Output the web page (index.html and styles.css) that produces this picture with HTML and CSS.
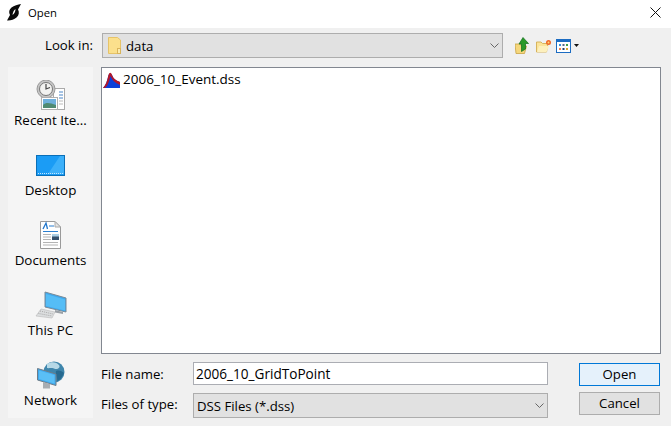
FILE: index.html
```html
<!DOCTYPE html>
<html lang="en">
<head>
<meta charset="utf-8">
<title>Open</title>
<link rel="stylesheet" href="styles.css">
</head>
<body>
<div class="dialog">
  <header class="titlebar">
    <svg class="app-icon" width="14" height="17" viewBox="0 0 14 17"><path d="M14 0C11 .5 7 1.500 4.500 3.500 2 5.500 1.500 8.500 3 11L0 16.500C3 17 7 15.500 9.500 13.500 12 11.500 12.500 8 11 5.500Z" fill="#0a0a0a"/><path d="M8.500 5C7 6 5.800 8.200 5.500 11 7 10 8.500 7.800 8.500 5Z" fill="#fff"/></svg>
    <span class="title">Open</span>
    <svg class="close" width="11" height="11" viewBox="0 0 11 11"><path d="M.5.500 10.500 10.500M10.500.500.5 10.500" stroke="#111" stroke-width="1" fill="none"/></svg>
  </header>
  <div class="toolbar">
    <span class="lookin-label">Look in:</span>
    <div class="combo lookin">
      <svg class="folder" width="13" height="17" viewBox="0 0 13 17"><path d="M.5.500H9.500L12.500 3V16.500H.5Z" fill="#fbe08c" stroke="#e6c368"/><rect x="9.500" y="11.500" width="3" height="5" fill="#fcecb0" stroke="#d9b45a"/></svg>
      <span class="combo-text">data</span>
      <svg class="chev" width="9" height="6" viewBox="0 0 9 6"><path d="M.5.500 4.500 4.500 8.500.5" fill="none" stroke="#666"/></svg>
    </div>
    <div class="tools">
      <svg width="14" height="17" viewBox="0 0 14 17"><path d="M0 7H5L6.500 9H11.500L9.500 16.500H1Z" fill="#f5d77c" stroke="#c9a244" stroke-width=".8"/><path d="M6.500 14.500V7H4L8 .5 13.500 6.500H10.500V12Z" fill="#2a9a2a" stroke="#0f6b1a" stroke-width=".7"/></svg>
      <svg class="tool-new" width="16" height="14" viewBox="0 0 16 14"><path d="M.5 3H5L6.500 4.500H12L10.500 13H.5Z" fill="#fbe49a" stroke="#d4ae52" stroke-width=".9"/><path d="M3 7H13L10.500 13H1Z" fill="#fdf0bd"/><circle cx="12.500" cy="3.500" r="2.500" fill="#f0682a"/><circle cx="12.500" cy="3.500" r="1" fill="#ffd86a"/></svg>
      <svg class="tool-view" width="15" height="14" viewBox="0 0 15 14"><rect x=".5" y=".5" width="14" height="13" fill="#fff" stroke="#1c6cc2"/><rect x="1" y="1" width="13" height="2" fill="#1c6cc2"/><rect x="3" y="5" width="2" height="2" fill="#3d8fd8"/><rect x="6.500" y="5" width="2" height="2" fill="#5a6a8a"/><rect x="10" y="5" width="2" height="2" fill="#3aa04a"/><rect x="3" y="9" width="2" height="2" fill="#ef8050"/><rect x="6.500" y="9" width="2" height="2" fill="#24406e"/><rect x="10" y="9" width="2" height="2" fill="#d9a52e"/></svg>
      <svg class="tool-caret" width="5" height="3" viewBox="0 0 5 3"><path d="M0 0H5L2.500 3Z" fill="#111"/></svg>
    </div>
  </div>
  <div class="main">
    <nav class="places">
      <div class="place">
        <div class="place-icon">
          <svg width="30" height="30" viewBox="0 0 30 30"><rect x="17.500" y="8.500" width="11" height="21" fill="#fff" stroke="#aaa"/><path d="M23 12h4M23 15h4M23 18h4" stroke="#4a86c8"/><path d="M23 21h4M23 24h4" stroke="#bbb"/><circle cx="10" cy="9" r="9" fill="#c4c4c4" stroke="#9a9a9a"/><circle cx="10" cy="9" r="6.500" fill="#f2f2f0" stroke="#777"/><path d="M10 4V9L14 7.500" fill="none" stroke="#444" stroke-width="1.200"/><rect x="5.500" y="17.500" width="16" height="12" fill="#fff" stroke="#b0b0b0"/><rect x="7" y="19" width="13" height="9" fill="#6fb0dc"/><path d="M7 25C10 22 14 23 20 25V28H7Z" fill="#4f8a72"/></svg>
        </div>
        <span class="place-label">Recent Ite...</span>
      </div>
      <div class="place">
        <div class="place-icon">
          <svg width="29" height="21" viewBox="0 0 29 21"><rect x=".5" y=".5" width="28" height="20" fill="#1b9cf5" stroke="#0a6fb8"/><path d="M12 19 24 1H28V19Z" fill="#3cb0fa"/><path d="M2 18.500H27" stroke="#bfe6ff" stroke-dasharray="1 1"/></svg>
        </div>
        <span class="place-label">Desktop</span>
      </div>
      <div class="place">
        <div class="place-icon">
          <svg width="21" height="28" viewBox="0 0 21 28"><path d="M.5.500H15L20.500 6V27.500H.5Z" fill="#fff" stroke="#9a9a9a"/><path d="M15 .5V6H20.500Z" fill="#e4e4e4" stroke="#aaa"/><path d="M3 8 6 2 7.500 8" fill="none" stroke="#2277cc" stroke-width="1.300"/><path d="M9 5h5M3 10.500H18" stroke="#2b7fd0"/><path d="M3 13.500h8M3 16h8M3 18.500h8M3 21.500H18M3 24H18" stroke="#b4b4b4"/><rect x="12" y="13" width="7" height="6" fill="#34506c"/><rect x="12" y="13" width="7" height="2.500" fill="#a9cde4"/></svg>
        </div>
        <span class="place-label">Documents</span>
      </div>
      <div class="place">
        <div class="place-icon">
          <svg width="32" height="28" viewBox="0 0 32 28"><path d="M10 1 31 7V21L10 16Z" fill="#3ea8ee" stroke="#7a8a96"/><path d="M11 3 30 8.500V19.500L11 15Z" fill="#55bdf6"/><path d="M20 19 28 21V23L20 21.500Z" fill="#9aa0a6"/><path d="M6 18 20 21 17 27 1 25Z" fill="#dcdedf" stroke="#b8b8b8" stroke-width=".6"/><path d="M5 20 18 23M3.500 22.500 17 25" stroke="#a8a8a8" stroke-dasharray="1 1"/></svg>
        </div>
        <span class="place-label">This PC</span>
      </div>
      <div class="place">
        <div class="place-icon">
          <svg width="28" height="29" viewBox="0 0 28 29"><circle cx="17" cy="11" r="10.500" fill="#3f86ac"/><path d="M10 3C14 0 20 1 22 4 24 7 20 9 17 7.500 14 6.500 12 7.500 10 7Z" fill="#b6d8e6"/><path d="M19 10C22 9 25 10 27 12 25 17 22 20 20 20 21 17 18 14 19 10Z" fill="#276a90"/><path d="M.5 7.500 19 13V24.500L.5 19Z" fill="#3fa9ee" stroke="#6d7c88"/><path d="M2 9.500 17.500 14V22.500L2 18Z" fill="#5abff6"/><path d="M6 21 13 23V27.500H6Z" fill="#a8adb2"/></svg>
        </div>
        <span class="place-label">Network</span>
      </div>
    </nav>
    <div class="content">
      <div class="filelist">
        <div class="file">
          <svg width="17" height="17" viewBox="0 0 17 17"><path d="M0 16C3 13 4 9 5.500 3 6.500 1 8 1 9 3 10.500 7 13 9 17 10V16Z" fill="#0c3fd8"/><path d="M0 16C3 13 4 9 5.500 3 6.500 0 8 0 9 3 10.500 7 13 8 17 10V13C12 11 9 8 7.500 4 6.500 8 5 14 2 16Z" fill="#b2172a"/></svg>
          <span class="file-name">2006_10_Event.dss</span>
        </div>
      </div>
      <div class="footer">
        <div class="fields">
          <div class="row row-name">
            <label class="field-label">File name:</label>
            <div class="input">2006_10_GridToPoint</div>
          </div>
          <div class="row row-type">
            <label class="field-label type-label">Files of type:</label>
            <div class="combo type">
              <span class="combo-text">DSS Files (*.dss)</span>
              <svg class="chev" width="9" height="6" viewBox="0 0 9 6"><path d="M.5.500 4.500 4.500 8.500.5" fill="none" stroke="#666"/></svg>
            </div>
          </div>
        </div>
        <div class="buttons">
          <div class="btn primary">Open</div>
          <div class="btn">Cancel</div>
        </div>
      </div>
    </div>
  </div>
</div>
</body>
</html>
```
FILE: styles.css
```css
* { box-sizing: border-box; }
html, body { margin: 0; padding: 0; }
body {
  width: 671px;
  height: 426px;
  overflow: hidden;
  background: #f0f0f0;
  font-family: "Open Sans", "Noto Sans", sans-serif;
  font-size: 13.200px;
  color: #000;
}
.dialog { display: flex; flex-direction: column; height: 426px; }
.titlebar {
  height: 28px;
  background: #fff;
  display: flex;
  align-items: center;
  padding: 0 10px 4px 7px;
  font-size: 11.300px;
}
.title { margin-left: 7px; flex: 1; }
.toolbar {
  height: 39px;
  padding: 5px 0 0 45px;
  display: flex;
  align-items: flex-start;
}
.lookin-label { width: 57px; height: 25px; line-height: 25px; }
.combo {
  background: #e1e1e1;
  border: 1px solid #adadad;
  display: flex;
  align-items: center;
}
.lookin { width: 401px; height: 25px; padding: 0 3px 0 5px; }
.folder { margin-right: 5px; }
.combo-text { flex: 1; }
.tools { display: flex; align-items: center; height: 25px; margin-left: 12px; }
.tool-new { margin-left: 7px; }
.tool-view { margin-left: 4px; }
.tool-caret { margin-left: 3px; }
.main { flex: 1; display: flex; padding: 0 10px 8px 8px; }
.places {
  width: 85px;
  background: #f5f5f5;
  display: flex;
  flex-direction: column;
  gap: 20px;
  padding-top: 12px;
}
.place { height: 50px; display: flex; flex-direction: column; align-items: center; }
.place-icon { height: 32px; display: flex; align-items: center; justify-content: center; }
.place-label { height: 18px; line-height: 18px; white-space: nowrap; font-size: 13.400px; }
.content { flex: 1; margin-left: 8px; display: flex; flex-direction: column; }
.filelist {
  height: 287px;
  background: #fff;
  border: 1px solid #828790;
  padding: 3px 1px;
}
.file { display: flex; align-items: center; gap: 3px; height: 18px; }
.file-name { font-size: 13.500px; line-height: 16px; margin-bottom: 2px; }
.footer { display: flex; margin-top: 8px; flex: 1; }
.fields { width: 447px; display: flex; flex-direction: column; }
.row { display: flex; align-items: center; }
.row-name { height: 23px; }
.row-type { height: 25px; margin-top: 8px; }
.field-label { width: 92px; }
.type-label { padding-bottom: 4px; }
.input {
  flex: 1;
  height: 23px;
  line-height: 21px;
  background: #fff;
  border: 1px solid #abadb3;
  padding-left: 2px;
  font-size: 13.600px;
}
.type { flex: 1; height: 25px; padding: 0 3px 0 3px; }
.buttons { margin-left: 31px; width: 81px; display: flex; flex-direction: column; gap: 6px; padding-top: 1px; }
.btn {
  height: 23px;
  line-height: 21px;
  text-align: center;
  background: #e1e1e1;
  border: 1px solid #adadad;
}
.primary { background: #e5f1fb; border-color: #0078d7; }
```
